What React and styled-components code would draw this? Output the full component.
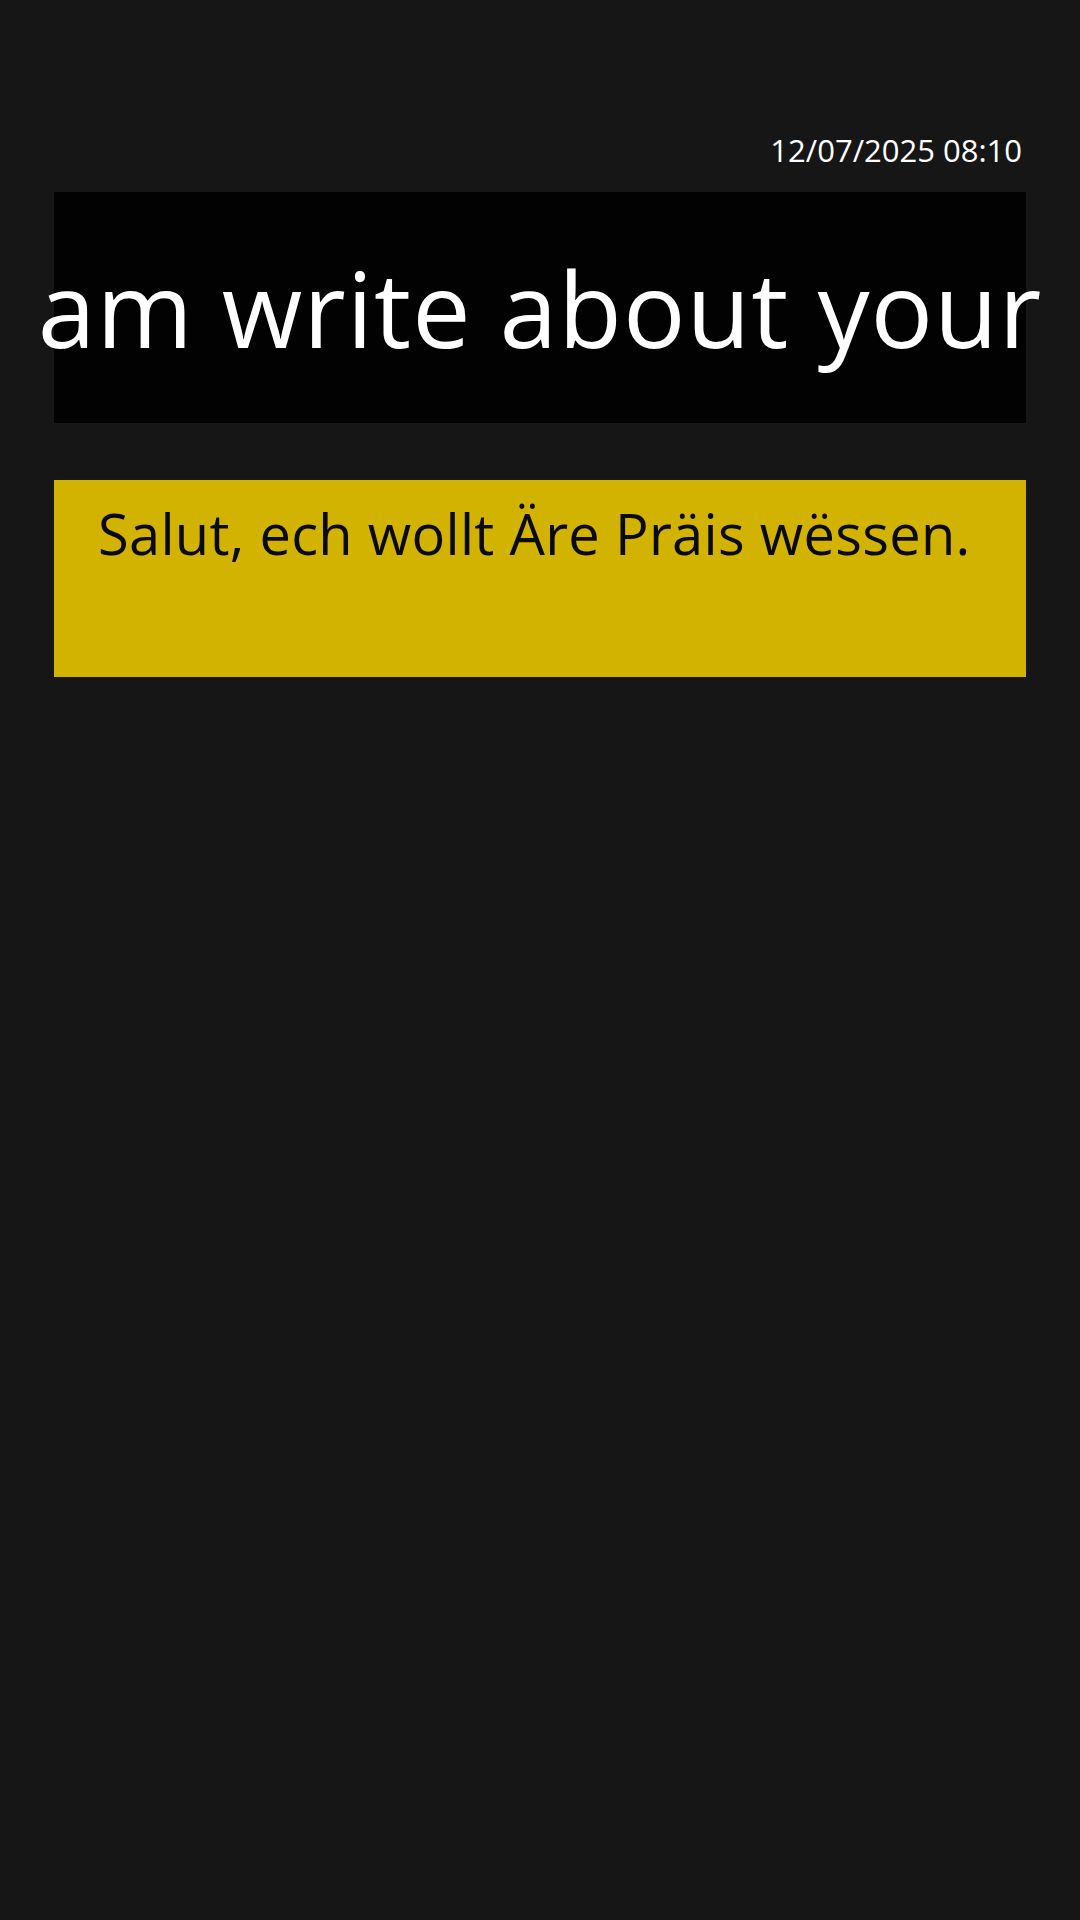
import React from "react";
import styled, { createGlobalStyle } from "styled-components";

const GlobalStyle = createGlobalStyle`
	html, body {
		margin: 0;
		padding: 0;
		background: #161616;
	}
	body {
		font-family: "Open Sans", "Noto Sans", sans-serif;
		overflow: hidden;
	}
`;

export default function App() {
	return (
		<Screen>
			<GlobalStyle />
			<DateLine>12/07/2025 08:10</DateLine>
			<Banner>
				<BannerText>am write about your</BannerText>
			</Banner>
			<Message>
				<MessageText>Salut, ech wollt Äre Präis wëssen.</MessageText>
			</Message>
		</Screen>
	);
}

const Screen = styled.div`
	display: flex;
	flex-direction: column;
	width: 1080px;
	height: 1920px;
	padding: 0 54px;
	box-sizing: border-box;
	background: #161616;
	overflow: hidden;
`;
const DateLine = styled.div`
	align-self: flex-end;
	margin: 130px 4px 0 0;
	color: #ffffff;
	font-size: 31px;
	line-height: 40px;
	height: 62px;
`;
const Banner = styled.div`
	display: flex;
	align-items: center;
	justify-content: center;
	height: 231px;
	background: #020202;
	overflow: visible;
`;
const BannerText = styled.div`
	color: #ffffff;
	font-size: 104px;
	line-height: 1;
	white-space: nowrap;
	letter-spacing: 1px;
`;
const Message = styled.div`
	margin-top: 57px;
	height: 197px;
	padding: 17px 44px;
	box-sizing: border-box;
	background: #d1b300;
`;
const MessageText = styled.div`
	color: #0a0a0a;
	font-size: 56px;
	line-height: 72px;
	letter-spacing: 0.3px;
	white-space: nowrap;
`;
